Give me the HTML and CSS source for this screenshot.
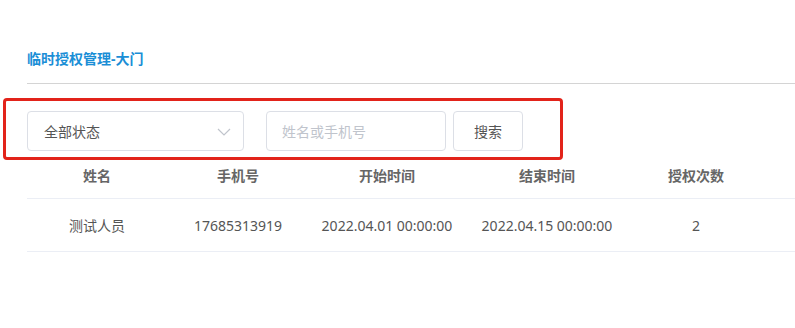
FILE: index.html
```html
<!DOCTYPE html>
<html lang="zh-CN">
<head>
    <meta charset="UTF-8">
    <meta name="viewport" content="width=device-width, initial-scale=1.0">
    <title>临时授权管理-大门</title>
    <link rel="stylesheet" href="styles.css">
</head>
<body>
    <div class="page">
        <div class="page-header">
            <h1 class="page-title">临时授权管理-大门</h1>
        </div>

        <div class="toolbar">
            <div class="select-box">
                <span class="select-text">全部状态</span>
                <svg class="select-arrow" width="14" height="8" viewBox="0 0 14 8">
                    <path d="M1 1 L7 7 L13 1" fill="none" stroke="#c0c4cc" stroke-width="1.2"/>
                </svg>
            </div>
            <input class="search-input" type="text" placeholder="姓名或手机号">
            <button class="search-btn">搜索</button>
        </div>

        <div class="table">
            <div class="row head">
                <div class="cell">姓名</div>
                <div class="cell">手机号</div>
                <div class="cell">开始时间</div>
                <div class="cell">结束时间</div>
                <div class="cell">授权次数</div>
                <div class="cell"></div>
            </div>
            <div class="row">
                <div class="cell">测试人员</div>
                <div class="cell">17685313919</div>
                <div class="cell">2022.04.01 00:00:00</div>
                <div class="cell">2022.04.15 00:00:00</div>
                <div class="cell">2</div>
                <div class="cell"></div>
            </div>
        </div>
    </div>

    <!-- annotation over the search area -->
    <div class="mark"></div>
</body>
</html>
```

FILE: styles.css
```css
/* Global */
body {
    margin: 0;
    background: #fff;
    font-family: "Microsoft YaHei", "Noto Sans", "Noto Sans CJK SC", sans-serif;
    color: #555;
    position: relative;
    overflow: hidden;
}

.page {
    padding-left: 27px;
}

/* Header */
.page-header {
    padding-top: 45px;
    padding-bottom: 10px;
    border-bottom: 1px solid #d4d4d4;
}

.page-title {
    margin: 0;
    font-size: 14px;
    line-height: 28px;
    font-weight: bold;
    color: #1a8ed6;
}

/* Search bar */
.toolbar {
    display: flex;
    align-items: center;
    margin-top: 27px;
    height: 40px;
}

.select-box {
    box-sizing: border-box;
    width: 217px;
    height: 40px;
    border: 1px solid #dcdfe6;
    border-radius: 4px;
    display: flex;
    align-items: center;
    justify-content: space-between;
    padding: 0 12px 0 16px;
    font-size: 14px;
    color: #555;
}

.select-arrow {
    margin-top: 2px;
}

.search-input {
    box-sizing: border-box;
    width: 180px;
    height: 40px;
    margin-left: 22px;
    border: 1px solid #dcdfe6;
    border-radius: 4px;
    padding: 0 15px;
    font-family: inherit;
    font-size: 14px;
    outline: none;
}

.search-input::placeholder {
    color: #c0c4cc;
}

.search-btn {
    box-sizing: border-box;
    width: 70px;
    height: 40px;
    margin-left: 7px;
    border: 1px solid #dcdfe6;
    border-radius: 4px;
    background: #fff;
    font-family: inherit;
    font-size: 14px;
    color: #555;
}

/* Table */
.row {
    display: grid;
    grid-template-columns: 140px 142px 156px 164px 134px 1fr;
    border-bottom: 1px solid #ebeef5;
    font-size: 14px;
}

.row .cell {
    display: flex;
    align-items: center;
    justify-content: center;
    white-space: nowrap;
}

.row.head {
    height: 47px;
    font-weight: bold;
    color: #666;
}

.row:not(.head) {
    height: 52px;
}

/* Red annotation frame */
.mark {
    position: absolute;
    left: 3px;
    top: 98px;
    width: 560px;
    height: 62px;
    box-sizing: border-box;
    border: 3px solid #e2231a;
    border-radius: 4px;
}
```
